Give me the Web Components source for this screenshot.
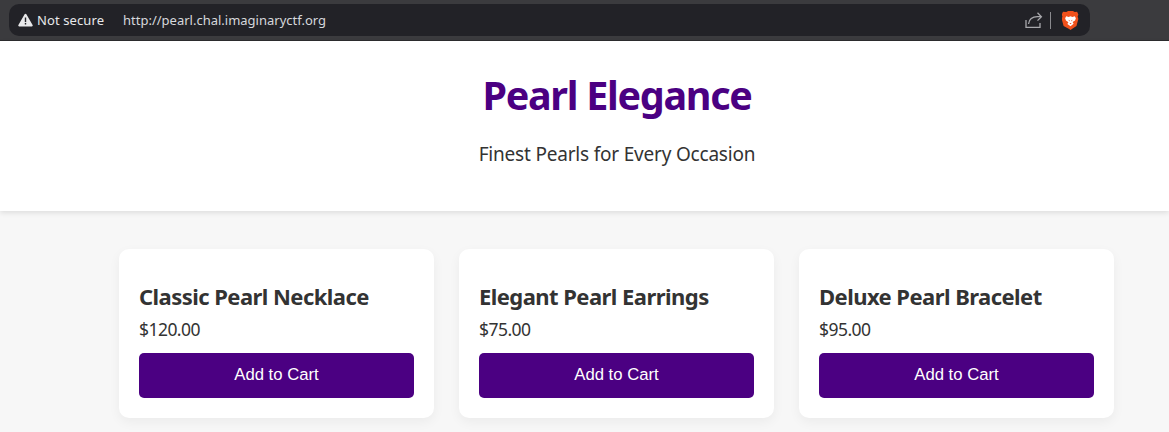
<!DOCTYPE html>
<html>
<head>
<meta charset="utf-8">
<title>Pearl Elegance</title>
<style>
html, body { margin: 0; height: 432px; overflow: hidden; background: #f7f7f7; }
body { font-family: "Noto Sans", "Open Sans", sans-serif; }
</style>
</head>
<body>
<browser-bar url="http://pearl.chal.imaginaryctf.org"></browser-bar>
<shop-page>
  <site-header slot="header" title="Pearl Elegance" tagline="Finest Pearls for Every Occasion"></site-header>
  <product-card name="Classic Pearl Necklace" price="$120.00"></product-card>
  <product-card name="Elegant Pearl Earrings" price="$75.00"></product-card>
  <product-card name="Deluxe Pearl Bracelet" price="$95.00"></product-card>
</shop-page>

<script>
class BrowserBar extends HTMLElement {
  constructor() {
    super();
    this.attachShadow({ mode: "open" });
    this.shadowRoot.innerHTML = `
    <style>
      :host { display: block; height: 41px; box-sizing: border-box; background: #3b3b3e; padding: 4px 79px 4px 9px; border-bottom: 1px solid #2c2c2e; }
      .pill { height: 32px; background: #222227; border-radius: 10px; display: flex; align-items: center; padding: 0 11px 0 9px; font: 13px "Noto Sans", sans-serif; color: #e8e8ea; }
      .warn { width: 15px; height: 14px; margin-right: 4px; }
      .secure { width: 67px; margin-right: 19px; letter-spacing: .1px; white-space: nowrap; }
      .url { flex: 1; color: #d6d8dc; }
      .share { width: 18px; height: 18px; }
      .sep { width: 1px; height: 17px; background: #8a8a8e; margin: 0 11px 0 7px; }
      .brave { width: 17px; height: 19px; }
    </style>
    <div class="pill">
    <svg class="warn" viewBox="0 0 15 14"><path d="M7.5 .8c.4 0 .7.2.9.5l6.2 10.800c.4.7-.1 1.500-.9 1.500H1.300c-.8 0-1.300-.8-.9-1.500L6.600 1.300c.2-.3.500-.5.900-.5z" fill="#e8e8ea"/><rect x="6.800" y="4.500" width="1.400" height="4.600" fill="#222227"/><rect x="6.800" y="10" width="1.400" height="1.500" fill="#222227"/></svg>
    <span class="secure">Not secure</span>
    <span class="url"></span>
    <svg class="share" viewBox="0 0 18 18" fill="none" stroke="#a8a8ac" stroke-width="1.300"><path d="M1 9v7.300h14V12"/><path d="M3.500 13c.6-4.500 4-7.300 9-7.300h3.500"/><path d="M12.500 1.800 16.400 5.700l-3.900 3.900"/></svg>
    <span class="sep"></span>
    <svg class="brave" viewBox="0 0 18 20"><path d="M4.500 1 6.500 0h5l2 1 2.500-.3 1.300 3-.7 2 .7 2.700-2 7.300L10.500 19 9 20l-1.500-1-5.800-3.300-2-7.300.7-2.700-.7-2 1.300-3z" fill="#f1511b"/><path d="M4.500 5.500 7 6.200 9 5.600l2 .6 2.500-.7 1.200 2-.9 2.400-2.600 1.700 1.100 1.900L9 16l-3.300-2.300 1.100-1.900-2.600-1.700-.9-2.400z" fill="#fff"/><path d="M7 9.200 8.300 10 7.500 11zM11 9.200 9.700 10l.8 1zM7.800 12.600h2.400L9 14z" fill="#f1511b"/></svg>
    </div>`;
    this.shadowRoot.querySelector(".url").textContent = this.getAttribute("url");
  }
}

class ShopPage extends HTMLElement {
  constructor() {
    super();
    this.attachShadow({ mode: "open" });
    this.shadowRoot.innerHTML = `
    <style>
      :host { display: block; }
      .grid { display: grid; grid-template-columns: repeat(3, 315px); gap: 25px; padding: 38px 0 0 119px; }
    </style>
    <slot name="header"></slot>
    <div class="grid"><slot></slot></div>`;
  }
}

class SiteHeader extends HTMLElement {
  constructor() {
    super();
    this.attachShadow({ mode: "open" });
    this.shadowRoot.innerHTML = `
    <style>
      /* the page behind the screenshot is wider than the window, so the centre sits right of the middle */
      :host { display: block; position: relative; height: 170px; box-sizing: border-box; background: #fff; text-align: center; padding: 27px 0 0 65px; box-shadow: 0 2px 5px rgba(0,0,0,.1); }
      h1 { margin: 0; font-size: 39.5px; line-height: 54px; font-weight: 700; color: #4b0082; letter-spacing: -1.3px; }
      p { margin: 19px 0 0; font-size: 19px; line-height: 26px; color: #333; letter-spacing: -0.2px; }
    </style>
    <h1></h1>
    <p></p>`;
    this.shadowRoot.querySelector("h1").textContent = this.getAttribute("title");
    this.shadowRoot.querySelector("p").textContent = this.getAttribute("tagline");
  }
}

class ProductCard extends HTMLElement {
  constructor() {
    super();
    this.attachShadow({ mode: "open" });
    this.shadowRoot.innerHTML = `
    <style>
      :host { display: block; height: 169px; box-sizing: border-box; background: #fff; border-radius: 10px; padding: 32px 20px 20px; box-shadow: 0 4px 12px rgba(0,0,0,.05); color: #333; }
      h2 { margin: 0; font-size: 22px; line-height: 30px; font-weight: 700; letter-spacing: -0.55px; }
      .price { margin: 6px 0 0; font-size: 17.5px; line-height: 24px; letter-spacing: -0.55px; }
      button { display: block; width: 100%; height: 45px; margin-top: 12px; border: 0; border-radius: 5px; background: #4b0082; color: #fff; font: 16.7px "Liberation Sans", Arial, sans-serif; padding: 0 0 2px; }
    </style>
    <h2></h2>
    <p class="price"></p>
    <button>Add to Cart</button>`;
    this.shadowRoot.querySelector("h2").textContent = this.getAttribute("name");
    this.shadowRoot.querySelector(".price").textContent = this.getAttribute("price");
  }
}

customElements.define("browser-bar", BrowserBar);
customElements.define("shop-page", ShopPage);
customElements.define("site-header", SiteHeader);
customElements.define("product-card", ProductCard);
</script>
</body>
</html>
